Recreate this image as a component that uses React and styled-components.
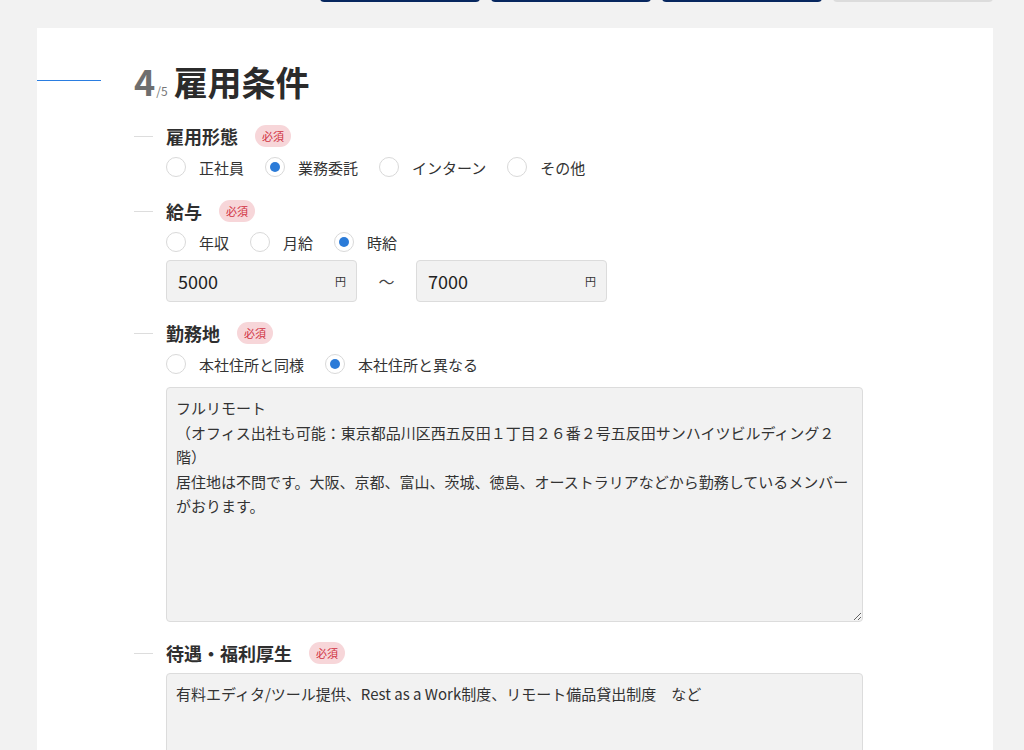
import styled, { createGlobalStyle } from "styled-components";

const GlobalStyle = createGlobalStyle`
  body {
    margin: 0;
    background: #f2f2f2;
    font-family: "Noto Sans CJK JP", "Noto Sans", sans-serif;
    color: #333;
  }
`;

const employmentTypes = [
  { label: "正社員", checked: false },
  { label: "業務委託", checked: true },
  { label: "インターン", checked: false },
  { label: "その他", checked: false },
];

const salaryTypes = [
  { label: "年収", checked: false },
  { label: "月給", checked: false },
  { label: "時給", checked: true },
];

const placeTypes = [
  { label: "本社住所と同様", checked: false },
  { label: "本社住所と異なる", checked: true },
];

const placeText = `フルリモート
（オフィス出社も可能：東京都品川区西五反田１丁目２６番２号五反田サンハイツビルディング２階）
居住地は不問です。大阪、京都、富山、茨城、徳島、オーストラリアなどから勤務しているメンバーがおります。`;

const benefitText = "有料エディタ/ツール提供、Rest as a Work制度、リモート備品貸出制度　など";

const RadioGroup = ({ items }) => (
  <RadioRow>
    {items.map((item) => (
      <RadioItem key={item.label}>
        <Circle $checked={item.checked} />
        {item.label}
      </RadioItem>
    ))}
  </RadioRow>
);

const FieldHead = ({ title }) => (
  <HeadRow>
    <Dash />
    <FieldTitle>{title}</FieldTitle>
    <Badge>必須</Badge>
  </HeadRow>
);

const App = () => {
  return (
    <>
      <GlobalStyle />
      <Toolbar>
        <TopButton $dark />
        <TopButton $dark />
        <TopButton $dark />
        <TopButton />
      </Toolbar>
      <Card>
        <TitleRow>
          <BlueLine />
          <StepNum>4</StepNum>
          <StepTotal>/5</StepTotal>
          <Title>雇用条件</Title>
        </TitleRow>

        <Form>
          <Field>
            <FieldHead title="雇用形態" />
            <Body>
              <RadioGroup items={employmentTypes} />
            </Body>
          </Field>

          <Field>
            <FieldHead title="給与" />
            <Body>
              <RadioGroup items={salaryTypes} />
              <RangeRow>
                <InputBox>
                  <Input defaultValue="5000" />
                  <Unit>円</Unit>
                </InputBox>
                <Tilde>〜</Tilde>
                <InputBox>
                  <Input defaultValue="7000" />
                  <Unit>円</Unit>
                </InputBox>
              </RangeRow>
            </Body>
          </Field>

          <Field>
            <FieldHead title="勤務地" />
            <Body>
              <RadioGroup items={placeTypes} />
              <TextArea $height={235} $top={10} defaultValue={placeText} />
            </Body>
          </Field>

          <Field>
            <FieldHead title="待遇・福利厚生" />
            <Body>
              <TextArea $height={150} $top={7} defaultValue={benefitText} />
            </Body>
          </Field>
        </Form>
      </Card>
    </>
  );
};

const Toolbar = styled.div`
  display: flex;
  justify-content: flex-end;
  gap: 11px;
  padding-right: 31px;
  margin-top: -38px;
`;

const TopButton = styled.div`
  width: 160px;
  height: 40px;
  box-sizing: border-box;
  border-radius: 4px;
  background: ${({ $dark }) => ($dark ? "#0d3a8c" : "#f7f7f7")};
  border-bottom: 2px solid ${({ $dark }) => ($dark ? "#07275f" : "#dcdcdc")};
`;

const Card = styled.section`
  margin: 26px 0 0 37px;
  width: 956px;
  background: #fff;
  padding: 31px 0 80px;
  box-sizing: border-box;
`;

const TitleRow = styled.div`
  display: flex;
  align-items: baseline;
  height: 42px;
  line-height: 42px;
`;

const BlueLine = styled.span`
  width: 64px;
  height: 0;
  border-top: 1px solid #2a7de1;
  margin-right: 33px;
  align-self: center;
`;

const StepNum = styled.span`
  font-size: 36px;
  font-weight: 700;
  color: #6e6e6e;
  letter-spacing: -1px;
`;

const StepTotal = styled.span`
  font-size: 12px;
  color: #777;
  margin: 0 6px 0 2px;
`;

const Title = styled.h1`
  margin: 0;
  font-size: 34px;
  font-weight: 700;
  color: #2b2b2b;
`;

const Form = styled.div`
  padding: 22px 0 0 97px;
`;

const Field = styled.div`
  & + & {
    margin-top: 18px;
  }
`;

const HeadRow = styled.div`
  display: flex;
  align-items: center;
  height: 26px;
`;

const Dash = styled.span`
  width: 19px;
  height: 0;
  border-top: 1px solid #dddddd;
  margin-right: 13px;
`;

const FieldTitle = styled.h2`
  margin: 0;
  font-size: 18px;
  font-weight: 700;
  color: #2f2f2f;
`;

const Badge = styled.span`
  margin-left: 17px;
  width: 36px;
  height: 22px;
  border-radius: 11px;
  background: #f7d6d9;
  color: #d0313f;
  font-size: 11px;
  display: flex;
  align-items: center;
  justify-content: center;
`;

const Body = styled.div`
  padding-left: 32px;
`;

const RadioRow = styled.div`
  display: flex;
  align-items: center;
  height: 26px;
  margin-top: 5px;
`;

const RadioItem = styled.label`
  display: flex;
  align-items: center;
  gap: 13px;
  margin-right: 21px;
  font-size: 15px;
  color: #333;
`;

const Circle = styled.span`
  width: 20px;
  height: 20px;
  box-sizing: border-box;
  border-radius: 50%;
  border: 1px solid #d9d9d9;
  background: #fff;
  display: flex;
  align-items: center;
  justify-content: center;

  &::after {
    content: "";
    display: ${({ $checked }) => ($checked ? "block" : "none")};
    width: 10px;
    height: 10px;
    border-radius: 50%;
    background: #2b7bd8;
  }
`;

const RangeRow = styled.div`
  display: flex;
  align-items: center;
  margin-top: 5px;
`;

const InputBox = styled.div`
  width: 191px;
  height: 42px;
  box-sizing: border-box;
  display: flex;
  align-items: center;
  background: #f2f2f2;
  border: 1px solid #dcdcdc;
  border-radius: 4px;
  padding: 0 10px 0 11px;
`;

const Input = styled.input`
  flex: 1;
  min-width: 0;
  border: none;
  background: transparent;
  outline: none;
  padding: 0;
  font-family: inherit;
  font-size: 18px;
  color: #222;
`;

const Unit = styled.span`
  font-size: 11px;
  color: #333;
`;

const Tilde = styled.span`
  width: 59px;
  text-align: center;
  font-size: 16px;
  color: #444;
`;

const TextArea = styled.textarea`
  display: block;
  width: 697px;
  height: ${({ $height }) => $height}px;
  margin-top: ${({ $top }) => $top}px;
  box-sizing: border-box;
  padding: 8px 9px;
  background: #f2f2f2;
  border: 1px solid #dcdcdc;
  border-radius: 4px;
  font-family: "Noto Sans CJK JP", "Noto Sans", sans-serif;
  font-size: 15px;
  line-height: 24.5px;
  color: #333;
  resize: vertical;
  outline: none;
`;

export default App;
